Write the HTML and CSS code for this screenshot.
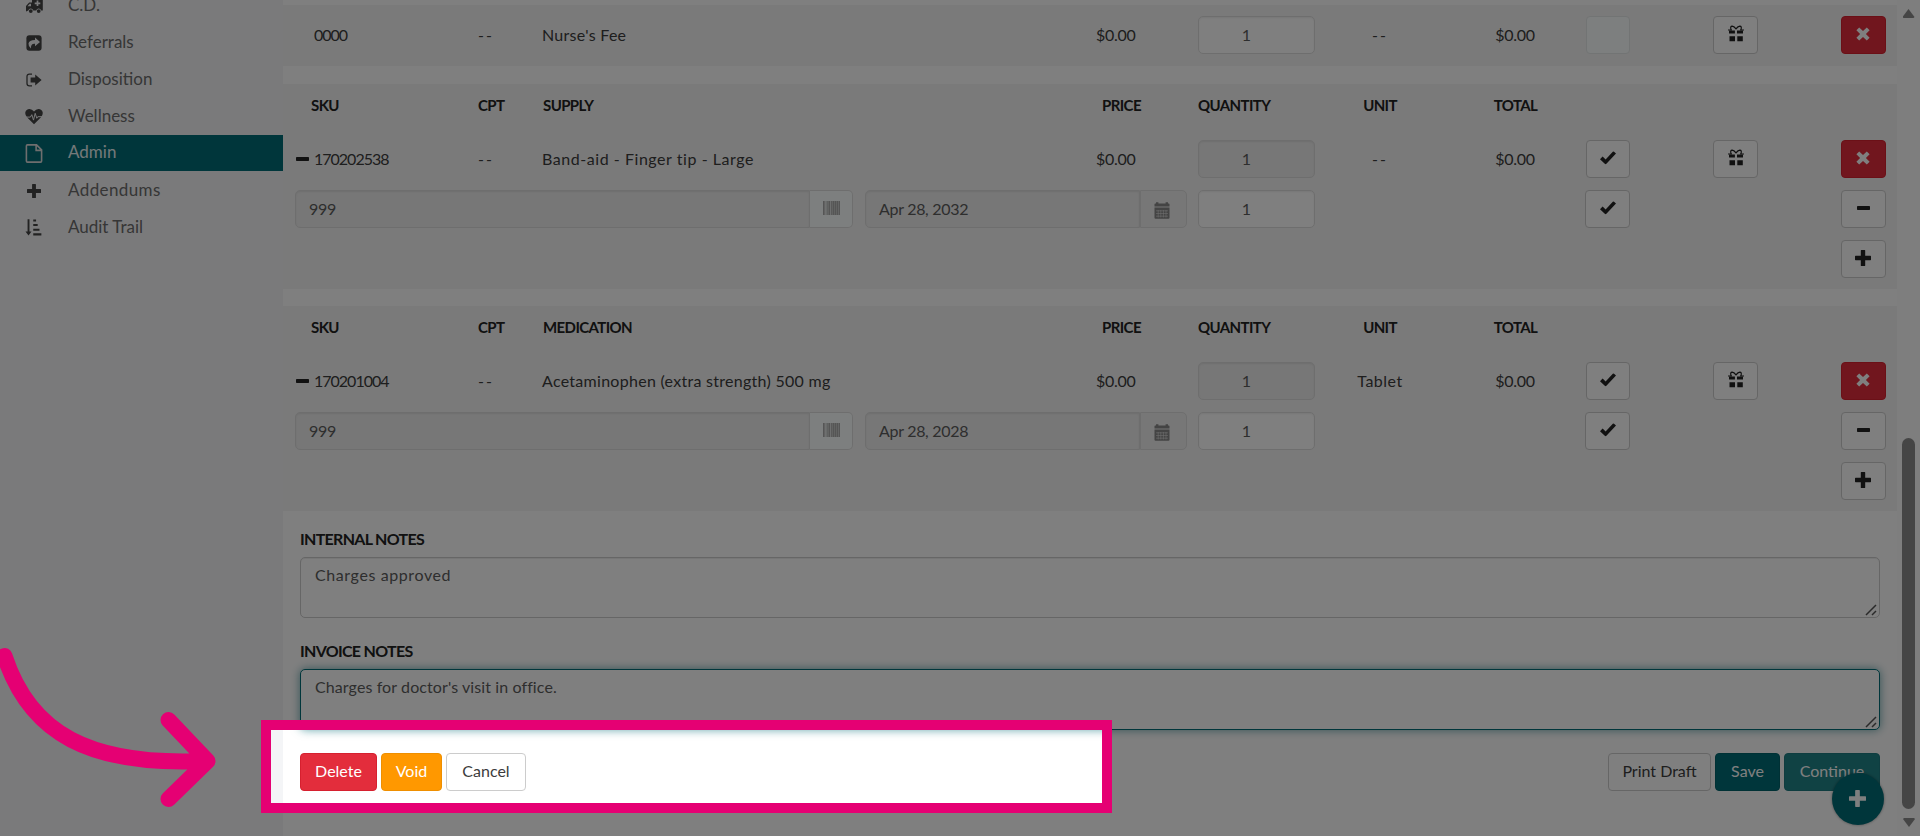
FILE: index.html
```html
<!DOCTYPE html>
<html lang="en">
<head>
    <meta charset="UTF-8">
    <meta name="viewport" content="width=device-width, initial-scale=1.0">
    <title>Admin</title>
    <link rel="stylesheet" href="styles.css">
</head>
<body>
    <svg class="sprite">
        <symbol id="check" viewBox="0 0 16 14"><path d="M0 8.2 2.6 5.6 5.6 8.4 12.8 .8Q13.4 .2 14 .8L16 2.6 6.4 12.8Q5.6 13.5 4.8 12.8Z"/></symbol>
        <symbol id="times" viewBox="0 0 14 14"><path d="M3.2.4 7 4.1 10.8.4 13.6 3.2 9.9 7 13.6 10.8 10.8 13.6 7 9.9 3.2 13.6.4 10.8 4.1 7 .4 3.2Z"/></symbol>
        <symbol id="plus" viewBox="0 0 16 16"><path d="M6.4 0h3.2q.6 0 .6.6v5.2h5.2q.6 0 .6.6v3.2q0 .6-.6.6h-5.2v5.2q0 .6-.6.6H6.4q-.6 0-.6-.6v-5.2H.6q-.6 0-.6-.6V6.4q0-.6.6-.6h5.2V.6q0-.6.6-.6z"/></symbol>
        <symbol id="minus" viewBox="0 0 13 4"><rect width="13" height="4" rx=".7"/></symbol>
        <symbol id="gift" viewBox="0 0 16 17"><path d="M1 5.400h5.9v3.2H1zM9 5.400h6v3.2H9zM1.500 11.200h5.500v5H1.500zM9.300 11.200H14.800v5H9.300z"/><path d="M0 5h4M12 5h4M3 4.600Q2 1.200 4.200 1.100 6 1.200 8 3.800 10 1.200 11.800 1.100q2.200.1 1.200 3.500" fill="none" stroke="currentColor" stroke-width="1.200"/></symbol>
        <symbol id="barcode" viewBox="0 0 17 14"><path d="M0 0h17v14H0z" opacity=".35"/><path d="M0 0h1.500v14H0zM3.800 0h.8v14h-.8zM5.500 0h1.500v14H5.500zM8 0h.8v14H8zM9.500 0h2v14h-2zM12 0h1.500v14H12zM14 0h1.200v14H14zM15.800 0H17v14h-1.200z"/></symbol>
        <symbol id="calendar" viewBox="0 0 16 17"><path d="M.5 4.400V2.200Q.5 1.400 1.400 1.400h.6V.2h2.400v1.200h7.200V.2H14v1.200h.6q.9 0 .9.8v2.200zM.5 5.600h15v10.200q0 1-1 1h-13q-1 0-1-1z"/><path d="M2 8.800h12M2 11.500h12M2 14.200h12M4.200 8v7.500M6.800 8v7.500M9.400 8v7.500M12 8v7.500" stroke="#ddd" stroke-width=".6"/></symbol>
        <symbol id="ambulance" viewBox="0 0 18 16"><path d="M1 14V8.5L4.2 5H7V1.2Q7 .5 7.8.5H17q.8 0 .8.8V13h-1.6a2.6 2.6 0 0 0-5 0H8.3a2.6 2.6 0 0 0-5 0z"/><circle cx="5.8" cy="13.6" r="1.9"/><circle cx="13.7" cy="13.6" r="1.9"/><path d="M12.5 3v5.6M9.7 5.8h5.6" stroke="#f4f5f7" stroke-width="1.7"/><path d="M2.5 8.8 4.8 6.3H6v2.5z" fill="#f4f5f7"/></symbol>
        <symbol id="share" viewBox="0 0 16 16"><rect x=".4" y=".3" width="15.2" height="15.4" rx="3"/><path d="M9 2.6 14 7 9 11.2V8.8Q4.5 8.4 5 13.6 2.2 11.4 2.5 8.6 3 5.2 9 5.1z" fill="#f4f5f7"/></symbol>
        <symbol id="signout" viewBox="0 0 16 14"><path d="M6 1.2H3.4Q1 1.2 1 3.6v6.8q0 2.4 2.4 2.4H6" fill="none" stroke="currentColor" stroke-width="1.3"/><path d="M4.6 4.6h4.6V1.5L15.6 7 9.2 12.6V9.5H4.6z"/></symbol>
        <symbol id="heartbeat" viewBox="0 0 18 16"><path d="M9 15.8 2 8.8Q-.2 6.4.4 3.6 1.2.6 4.4.4 7 .3 9 3 11 .3 13.6.4q3.2.2 4 3.2.6 2.8-1.6 5.2z"/><path d="M1 8.600h4.400L6.800 6.200l1.700 5.400L10.200 4.800l1.600 5 1-1.600H17" fill="none" stroke="#f4f5f7" stroke-width="1"/></symbol>
        <symbol id="file" viewBox="0 0 16 18"><path d="M1.8.8h8.6L15.2 5.6v10.6q0 1-1 1H1.8q-1 0-1-1V1.8q0-1 1-1zM10 .8V6h5" fill="none" stroke="currentColor" stroke-width="1.5"/></symbol>
        <symbol id="sort" viewBox="0 0 18 18"><path d="M2.2.3h2v13h2.2L3.2 17.6 0 13.3h2.2zM8.2.4h3v2.2h-3zM8.2 5.3h4.7v2.2H8.2zM8.2 10.2h6.6v2.2H8.2zM8.2 15.2h8.6v2.2H8.2z"/></symbol>
        <symbol id="grip" viewBox="0 0 12 12"><path d="M1 11 11 1M7 11 11 7" fill="none" stroke="currentColor" stroke-width="1.5"/></symbol>
    </svg>

    <div class="page">
        <nav class="sidebar">
            <a class="nav-item"><svg class="nav-icon"><use href="#ambulance"/></svg>C.D.</a>
            <a class="nav-item"><svg class="nav-icon square"><use href="#share"/></svg>Referrals</a>
            <a class="nav-item"><svg class="nav-icon square"><use href="#signout"/></svg>Disposition</a>
            <a class="nav-item"><svg class="nav-icon"><use href="#heartbeat"/></svg>Wellness</a>
            <a class="nav-item active"><svg class="nav-icon"><use href="#file"/></svg>Admin</a>
            <a class="nav-item spaced"><svg class="nav-icon small"><use href="#plus"/></svg>Addendums</a>
            <a class="nav-item"><svg class="nav-icon"><use href="#sort"/></svg>Audit Trail</a>
        </nav>

        <main class="main">
            <section class="charges services">
                <div class="row">
                    <span class="sku no-toggle">0000</span>
                    <span class="dashes">--</span>
                    <span class="name">Nurse's Fee</span>
                    <span class="num">$0.00</span>
                    <span class="field qty">1</span>
                    <span class="mid dashes">--</span>
                    <span class="mid num">$0.00</span>
                    <button class="btn icon-btn blank"></button>
                    <button class="btn icon-btn"><svg class="i-gift"><use href="#gift"/></svg></button>
                    <button class="btn icon-btn danger"><svg class="i-times"><use href="#times"/></svg></button>
                </div>
            </section>

            <section class="charges">
                <div class="row head">
                    <span class="h-sku">SKU</span>
                    <span>CPT</span>
                    <span>SUPPLY</span>
                    <span class="h-price">PRICE</span>
                    <span>QUANTITY</span>
                    <span class="mid">UNIT</span>
                    <span class="mid">TOTAL</span>
                </div>
                <div class="row">
                    <span class="sku"><svg class="i-toggle"><use href="#minus"/></svg>170202538</span>
                    <span class="dashes">--</span>
                    <span class="name wide">Band-aid - Finger tip - Large</span>
                    <span class="num">$0.00</span>
                    <span class="field qty disabled">1</span>
                    <span class="mid dashes">--</span>
                    <span class="mid num">$0.00</span>
                    <button class="btn icon-btn"><svg class="i-check"><use href="#check"/></svg></button>
                    <button class="btn icon-btn"><svg class="i-gift"><use href="#gift"/></svg></button>
                    <button class="btn icon-btn danger"><svg class="i-times"><use href="#times"/></svg></button>
                </div>
                <div class="row lot-row">
                    <div class="lot">
                        <span class="field lot-number disabled">999</span>
                        <span class="addon scan"><svg class="i-barcode"><use href="#barcode"/></svg></span>
                        <span class="field lot-date disabled">Apr 28, 2032</span>
                        <span class="addon date"><svg class="i-calendar"><use href="#calendar"/></svg></span>
                    </div>
                    <span class="field qty">1</span>
                    <button class="btn icon-btn lot-check"><svg class="i-check"><use href="#check"/></svg></button>
                    <button class="btn icon-btn last"><svg class="i-minus"><use href="#minus"/></svg></button>
                </div>
                <div class="row add-row">
                    <button class="btn icon-btn last"><svg class="i-plus"><use href="#plus"/></svg></button>
                </div>
            </section>

            <section class="charges medication">
                <div class="row head">
                    <span class="h-sku">SKU</span>
                    <span>CPT</span>
                    <span>MEDICATION</span>
                    <span class="h-price">PRICE</span>
                    <span>QUANTITY</span>
                    <span class="mid">UNIT</span>
                    <span class="mid">TOTAL</span>
                </div>
                <div class="row">
                    <span class="sku"><svg class="i-toggle"><use href="#minus"/></svg>170201004</span>
                    <span class="dashes">--</span>
                    <span class="name">Acetaminophen (extra strength) 500 mg</span>
                    <span class="num">$0.00</span>
                    <span class="field qty disabled">1</span>
                    <span class="mid tablet">Tablet</span>
                    <span class="mid num">$0.00</span>
                    <button class="btn icon-btn"><svg class="i-check"><use href="#check"/></svg></button>
                    <button class="btn icon-btn"><svg class="i-gift"><use href="#gift"/></svg></button>
                    <button class="btn icon-btn danger"><svg class="i-times"><use href="#times"/></svg></button>
                </div>
                <div class="row lot-row">
                    <div class="lot">
                        <span class="field lot-number disabled">999</span>
                        <span class="addon scan"><svg class="i-barcode"><use href="#barcode"/></svg></span>
                        <span class="field lot-date disabled">Apr 28, 2028</span>
                        <span class="addon date"><svg class="i-calendar"><use href="#calendar"/></svg></span>
                    </div>
                    <span class="field qty">1</span>
                    <button class="btn icon-btn lot-check"><svg class="i-check"><use href="#check"/></svg></button>
                    <button class="btn icon-btn last"><svg class="i-minus"><use href="#minus"/></svg></button>
                </div>
                <div class="row add-row">
                    <button class="btn icon-btn last"><svg class="i-plus"><use href="#plus"/></svg></button>
                </div>
            </section>

            <section class="notes">
                <label class="notes-label" for="internal">INTERNAL NOTES</label>
                <div class="notes-wrap">
                    <textarea class="notes-box wide" id="internal">Charges approved</textarea>
                    <svg class="i-grip"><use href="#grip"/></svg>
                </div>
                <label class="notes-label" for="invoice">INVOICE NOTES</label>
                <div class="notes-wrap">
                    <textarea class="notes-box focused" id="invoice">Charges for doctor's visit in office.</textarea>
                    <svg class="i-grip"><use href="#grip"/></svg>
                </div>
            </section>

            <footer class="actions">
                <button class="btn danger b-delete">Delete</button>
                <button class="btn warning b-void">Void</button>
                <button class="btn b-cancel">Cancel</button>
                <button class="btn b-print">Print Draft</button>
                <button class="btn primary b-save">Save</button>
                <button class="btn info b-continue">Continue</button>
            </footer>
        </main>

        <div class="scrollbar">
            <span class="arrow-up"></span>
            <span class="thumb"></span>
            <span class="arrow-down"></span>
        </div>
    </div>

    <div class="fab"><svg class="i-fab"><use href="#plus"/></svg></div>

    <!-- tutorial overlay -->
    <div class="spotlight"></div>
    <svg class="pointer" viewBox="0 0 230 190">
        <path d="M4.5 16C30 94 90 126 204 121M168.500 80 207.500 121 168.500 159"/>
    </svg>
</body>
</html>
```
FILE: styles.css
```css
* {
    box-sizing: border-box;
}

body {
    margin: 0;
    height: 836px;
    overflow: hidden;
    font-family: Lato, "Open Sans", sans-serif;
    font-size: 16px;
    line-height: 20px;
    color: #3c3c3c;
    background: #fff;
}

svg {
    display: block;
    fill: currentColor;
}

.sprite {
    display: none;
}

.page {
    display: flex;
    height: 836px;
}

/* Sidebar */
.sidebar {
    width: 283px;
    flex: none;
    background: #f4f5f7;
}

.nav-item {
    display: flex;
    align-items: center;
    height: 36px;
    margin-bottom: 1px;
    padding-left: 25px;
    padding-bottom: 1px;
    font-size: 17px;
    color: #6c6c6c;
}

.nav-item:first-child {
    margin-top: -13px;
}

.nav-item.active {
    padding-bottom: 2px;
    color: #e8f2f3;
    background: #006d77;
}

.nav-item.spaced {
    letter-spacing: 0.4px;
}

.nav-icon {
    width: 18px;
    height: 17px;
    margin: 2px 25px 0 0;
    color: #444;
}

.nav-icon.square {
    width: 16px;
    height: 16px;
    margin: 2px 26px 0 1px;
}

.nav-icon.small {
    width: 16px;
    height: 14px;
    margin-left: 1px;
    margin-right: 26px;
}

.active .nav-icon {
    height: 19px;
    color: #ddd;
}

/* Charge tables */
.main {
    width: 1614px;
    flex: none;
    background: #fff;
}

.charges {
    height: 205px;
    margin-top: 18px;
    padding: 0 11px 0 12px;
    background: #f4f4f4;
}

.charges.services {
    height: 61px;
    margin-top: 5px;
    padding-top: 11px;
}

.charges.medication {
    margin-top: 17px;
}

.row {
    display: grid;
    grid-template-columns: 183px 65px 553px 102px 117px 130px 141px 127px 128px 45px;
    align-items: center;
    height: 38px;
}

.row.head {
    height: 42px;
    margin-bottom: 14px;
    font-size: 15px;
    font-weight: 700;
    letter-spacing: -0.6px;
    color: #222;
}

.lot-row {
    margin-top: 12px;
}

.add-row {
    margin-top: 12px;
}

.h-sku {
    padding-left: 16px;
}

.h-price {
    padding-left: 6px;
}

.sku {
    display: flex;
    align-items: center;
    gap: 5px;
    letter-spacing: -1px;
}

.no-toggle {
    padding-left: 19px;
}

.name {
    margin-left: -1px;
    letter-spacing: 0.28px;
}

.name.wide {
    letter-spacing: 0.55px;
}

.i-toggle {
    width: 13px;
    height: 4px;
    margin-left: 1px;
    color: #222;
}

.num {
    letter-spacing: -0.3px;
}

.mid.num {
    padding-right: 1px;
}

.dashes {
    letter-spacing: 2px;
}

.mid {
    text-align: center;
}

.tablet {
    letter-spacing: 0.5px;
}

.field {
    height: 38px;
    padding: 8px 13px;
    border: 1px solid #ddd;
    border-radius: 5px;
    background: #fff;
    box-shadow: inset 0 1px 2px rgba(0, 0, 0, 0.07);
    color: #5c5c5c;
}

.field.disabled {
    background: #eee;
}

.qty {
    padding-right: 33px;
    text-align: center;
}

.lot {
    display: flex;
    grid-column: 1 / 5;
}

.lot-number {
    width: 515px;
    border-radius: 5px 0 0 5px;
    letter-spacing: -0.3px;
}

.lot-date {
    width: 275px;
    margin-left: 12px;
    border-radius: 5px 0 0 5px;
    letter-spacing: -0.3px;
}

.addon {
    display: flex;
    align-items: center;
    justify-content: center;
    height: 38px;
    border: 1px solid #ddd;
    border-left-width: 0;
    border-radius: 0 5px 5px 0;
}

.addon.scan {
    width: 43px;
    padding-bottom: 3px;
    background: #fbfffe;
    color: #aaa;
}

.addon.date {
    width: 47px;
    padding: 3px 4px 0 0;
    border-left-width: 1px;
    background: #eee;
    color: #888;
}

.i-barcode {
    width: 17px;
    height: 14px;
}

.i-calendar {
    width: 16px;
    height: 17px;
}

/* Buttons */
.btn {
    display: flex;
    align-items: center;
    justify-content: center;
    height: 38px;
    padding: 0 0 3px;
    border: 1px solid #ccc;
    border-radius: 4px;
    background: #fff;
    font: inherit;
    color: #3c3c3c;
}

.btn.danger {
    border-color: #d6202f;
    background: #e32d3c;
    color: #fff;
}

.btn.warning {
    border-color: #ef8f00;
    background: #ff9800;
    color: #fff;
}

.btn.primary {
    border-color: #00626b;
    background: #006d77;
    color: #fff;
}

.btn.info {
    border-color: #1f7b80;
    background: #218489;
    color: #fff;
}

.icon-btn {
    width: 45px;
    color: #222;
}

.icon-btn:nth-child(8) {
    width: 44px;
}

.icon-btn.blank {
    border-color: #e4e8e8;
    background: #fbfffe;
}

.lot-check {
    grid-column: 8;
    margin-left: -1px;
}

.last {
    grid-column: 10;
}

.i-check {
    width: 16px;
    height: 14px;
}

.i-times {
    width: 14px;
    height: 14px;
    margin-right: 1px;
}

.i-gift {
    width: 16px;
    height: 17px;
}

.i-minus {
    width: 13px;
    height: 4px;
}

.i-plus {
    width: 16px;
    height: 16px;
    margin-right: 2px;
}

/* Notes */
.notes {
    padding: 18px 17px 0;
}

.notes-label {
    display: block;
    height: 28px;
    font-weight: 700;
    letter-spacing: -0.7px;
    color: #222;
}

.notes-wrap {
    position: relative;
    margin-bottom: 23px;
}

.notes-box {
    display: block;
    width: 1580px;
    height: 61px;
    padding: 7px 14px;
    border: 1px solid #ccc;
    border-radius: 5px;
    outline: none;
    resize: none;
    font: inherit;
    letter-spacing: 0.1px;
    color: #5c5c5c;
    box-shadow: inset 0 1px 1px rgba(0, 0, 0, 0.07);
}

.notes-box.wide {
    letter-spacing: 0.6px;
}

.notes-box.focused {
    border-color: #006d77;
    box-shadow: 0 0 10px rgba(0, 109, 119, 0.6);
}

.i-grip {
    position: absolute;
    right: 3px;
    bottom: 2px;
    width: 12px;
    height: 12px;
    color: #555;
}

.actions {
    display: flex;
    gap: 4px;
    padding: 0 17px;
}

.b-delete {
    width: 77px;
}

.b-void {
    width: 61px;
}

.b-cancel {
    width: 80px;
}

.b-print {
    width: 103px;
    margin-left: auto;
}

.b-save {
    width: 65px;
}

.b-continue {
    width: 96px;
}

/* Scrollbar */
.scrollbar {
    display: flex;
    flex-direction: column;
    align-items: center;
    flex: 1;
    padding: 9px 0;
    background: #fcfcfc;
}

.arrow-up,
.arrow-down {
    width: 12px;
    height: 9px;
    background: #8b8b8b;
    clip-path: polygon(50% 0, 100% 90%, 92% 100%, 8% 100%, 0 90%);
}

.arrow-down {
    margin-top: 9px;
    transform: rotate(180deg);
}

.thumb {
    width: 13px;
    height: 371px;
    margin-top: auto;
    border-radius: 7px;
    background: #8b8b8b;
}

.fab {
    position: absolute;
    left: 1832px;
    top: 773px;
    display: flex;
    align-items: center;
    justify-content: center;
    width: 52px;
    height: 52px;
    padding: 0 1px 1px 0;
    border-radius: 50%;
    background: #006d77;
    color: #fff;
    box-shadow: 0 0 3px rgba(0, 0, 0, 0.4);
}

.i-fab {
    width: 17px;
    height: 17px;
}

/* Dims the page except for the framed area */
.spotlight {
    position: absolute;
    left: 271px;
    top: 730px;
    width: 831px;
    height: 73px;
    outline: 10px solid #e50073;
    box-shadow: 0 0 0 2000px rgba(0, 0, 0, 0.5);
}

.pointer {
    position: absolute;
    left: 0;
    top: 640px;
    width: 230px;
    height: 190px;
    fill: none;
    stroke: #e50073;
    stroke-width: 16px;
    stroke-linecap: round;
    stroke-linejoin: round;
}
```
